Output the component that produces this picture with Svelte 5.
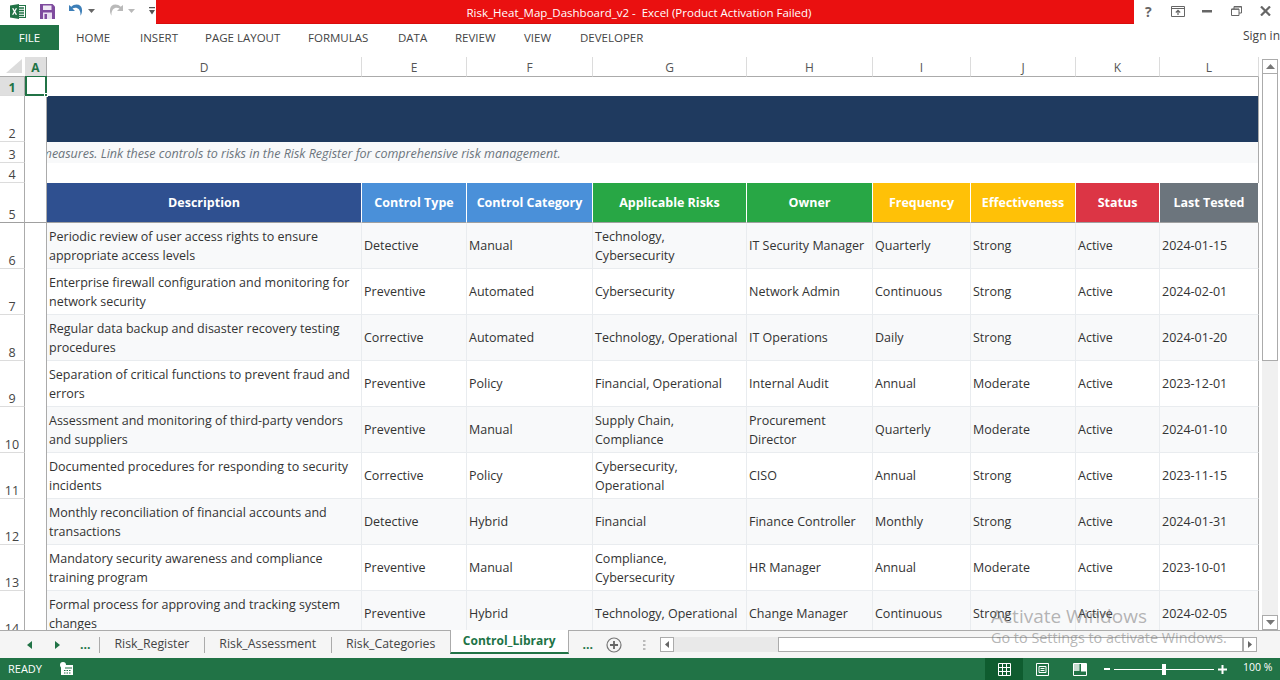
<script>
  const cols = ['D','E','F','G','H','I','J','K','L'];
  const heads = [
    ['Description','#2f5090'],['Control Type','#4a90d9'],['Control Category','#4a90d9'],
    ['Applicable Risks','#28a745'],['Owner','#28a745'],['Frequency','#ffc107'],
    ['Effectiveness','#ffc107'],['Status','#dc3545'],['Last Tested','#6c757d']
  ];
  const data = [
    [6,'Periodic review of user access rights to ensure appropriate access levels','Detective','Manual','Technology, Cybersecurity','IT Security Manager','Quarterly','Strong','Active','2024-01-15'],
    [7,'Enterprise firewall configuration and monitoring for network security','Preventive','Automated','Cybersecurity','Network Admin','Continuous','Strong','Active','2024-02-01'],
    [8,'Regular data backup and disaster recovery testing procedures','Corrective','Automated','Technology, Operational','IT Operations','Daily','Strong','Active','2024-01-20'],
    [9,'Separation of critical functions to prevent fraud and errors','Preventive','Policy','Financial, Operational','Internal Audit','Annual','Moderate','Active','2023-12-01'],
    [10,'Assessment and monitoring of third-party vendors and suppliers','Preventive','Manual','Supply Chain, Compliance','Procurement Director','Quarterly','Moderate','Active','2024-01-10'],
    [11,'Documented procedures for responding to security incidents','Corrective','Policy','Cybersecurity, Operational','CISO','Annual','Strong','Active','2023-11-15'],
    [12,'Monthly reconciliation of financial accounts and transactions','Detective','Hybrid','Financial','Finance Controller','Monthly','Strong','Active','2024-01-31'],
    [13,'Mandatory security awareness and compliance training program','Preventive','Manual','Compliance, Cybersecurity','HR Manager','Annual','Moderate','Active','2023-10-01'],
    [14,'Formal process for approving and tracking system changes','Preventive','Hybrid','Technology, Operational','Change Manager','Continuous','Strong','Active','2024-02-05']
  ];
  const menu = ['HOME','INSERT','PAGE LAYOUT','FORMULAS','DATA','REVIEW','VIEW','DEVELOPER'];
  const sheets = ['Risk_Register','Risk_Assessment','Risk_Categories'];
</script>

<div class="app">
  <header class="title">
    <div class="qat">
      <svg class="ico-xl" width="16" height="15" viewBox="0 0 16 15">
        <rect x="6.500" y="1.500" width="9" height="12" fill="#fff" stroke="#217346"/>
        <path d="M9 4h5M9 6.500h5M9 9h5M9 11.500h5" stroke="#217346" stroke-width="1.300"/>
        <path d="M0 1.500 9 0v15L0 13.500z" fill="#217346"/>
        <path d="M2 4.300h1.600l1 2 1-2h1.500L5.300 7.500l1.800 3.300H5.500l-1-2-1 2H2l1.800-3.300z" fill="#fff"/>
      </svg>
      <svg class="ico-save" width="15" height="15" viewBox="0 0 15 15">
        <path d="M0 0h12.500L15 2.500V15H0z" fill="#7e4a9e"/>
        <rect x="3" y="1.500" width="8.500" height="4.500" fill="#efe8f4"/>
        <rect x="3" y="8.500" width="9" height="6.500" fill="#e9dff0"/>
        <rect x="4.500" y="10" width="2.500" height="5" fill="#7e4a9e"/>
      </svg>
      <svg class="ico-undo" width="16" height="16" viewBox="0 0 16 16">
        <path d="M1 2v6h6L4.500 5.600C7.500 3.500 13 4.800 12.500 12.800 15 9 15 1.500 8.500 1.500 6.500 1.500 4.800 2.300 3.300 3.800z" fill="#3d7fb8"/>
      </svg>
      <svg class="caret c1" width="7" height="4" viewBox="0 0 7 4"><path d="M0 0h7L3.500 4z" fill="#666"/></svg>
      <svg class="ico-redo" width="16" height="16" viewBox="0 0 16 16">
        <path d="M15 2v6H9l2.500-2.400C8.500 3.500 3 4.800 3.500 12.800 1 9 1 1.500 7.500 1.500c2 0 3.700.8 5.200 2.300z" fill="#b9b9b9"/>
      </svg>
      <svg class="caret c2" width="7" height="4" viewBox="0 0 7 4"><path d="M0 0h7L3.500 4z" fill="#b9b9b9"/></svg>
      <svg class="custom" width="6" height="8" viewBox="0 0 6 8"><path d="M0 0h6v1.200H0zM0 3h6L3 7.500z" fill="#555"/></svg>
    </div>
    <div class="red"><span>Risk_Heat_Map_Dashboard_v2 -&nbsp; Excel (Product Activation Failed)</span></div>
    <div class="win">
      <span class="help">?</span>
      <svg class="w-full" width="14" height="11" viewBox="0 0 14 11"><path d="M.5.500h13v10H.5z M.5 2.500h13" fill="none" stroke="#666"/><path d="M7 9V4.500M4.800 6.500 7 4.300l2.200 2.200" fill="none" stroke="#666" stroke-width="1.200"/></svg>
      <svg class="w-min" width="10" height="3" viewBox="0 0 10 3"><rect width="10" height="2.500" fill="#666"/></svg>
      <svg class="w-max" width="11" height="10" viewBox="0 0 11 10"><path d="M.5 3h7.500v6.500H.5zM3 3V.5h7.500V7H8" fill="none" stroke="#666"/><path d="M.5 3.300h7.500M3 1h7.500" stroke="#666"/></svg>
      <svg class="w-x" width="11" height="10" viewBox="0 0 11 10"><path d="M1 .5 10 9.500M10 .5 1 9.500" stroke="#666" stroke-width="2.200"/></svg>
    </div>
  </header>

  <nav class="ribbon">
    <span class="file">FILE</span>
    <div class="menu">
      {#each menu as m}<span>{m}</span>{/each}
    </div>
    <span class="signin">Sign in</span>
  </nav>

  <main class="work">
    <div class="sheet">
      <div class="corner"><svg width="16" height="14" viewBox="0 0 16 14"><path d="M16 0v14H0z" fill="#dcdcdc"/></svg></div>
      <div class="ch sel">A</div>
      {#each cols as c}<div class="ch">{c}</div>{/each}

      <div class="rh rsel">1</div>
      <div class="acell"><i></i><b></b></div>
      <div class="blank span9"></div>

      <div class="rh">2</div><div class="a"></div>
      <div class="navy span9"></div>

      <div class="rh">3</div><div class="a"></div>
      <div class="note span9"><span>measures. Link these controls to risks in the Risk Register for comprehensive risk management.</span></div>

      <div class="rh">4</div><div class="a"></div>
      <div class="blank span9"></div>

      <div class="rh hline">5</div><div class="a hline"></div>
      {#each heads as h}<div class="th" style="background:{h[1]}">{h[0]}</div>{/each}

      {#each data as r, i}
        <div class="rh">{r[0]}</div><div class="a"></div>
        {#each r.slice(1) as v, j}<div class="td" class:alt={i % 2 === 0} class:last={j === 8}>{v}</div>{/each}
      {/each}
    </div>

    <aside class="vscroll">
      <div class="btn"><svg width="9" height="5" viewBox="0 0 9 5"><path d="M4.500 0 9 5H0z" fill="#777"/></svg></div>
      <div class="thumb"></div>
      <div class="track"></div>
      <div class="btn"><svg width="9" height="5" viewBox="0 0 9 5"><path d="M0 0h9L4.500 5z" fill="#777"/></svg></div>
    </aside>
  </main>

  <footer class="tabs">
    <div class="tnav">
      <svg width="5" height="8" viewBox="0 0 5 8"><path d="M5 0v8L0 4z" fill="#217346"/></svg>
      <svg width="5" height="8" viewBox="0 0 5 8"><path d="M0 0v8l5-4z" fill="#217346"/></svg>
      <b>...</b>
    </div>
    {#each sheets as s}<div class="tab">{s}</div>{/each}
    <div class="tab active">Control_Library</div>
    <b class="more">...</b>
    <svg class="plus" width="16" height="16" viewBox="0 0 16 16"><circle cx="8" cy="8" r="7" fill="none" stroke="#777" stroke-width="1.200"/><path d="M8 4v8M4 8h8" stroke="#666" stroke-width="1.800"/></svg>
    <svg class="dots" width="3" height="10" viewBox="0 0 3 10"><path d="M0 0h2.500v2H0zM0 4h2.500v2H0zM0 8h2.500v2H0z" fill="#bbb"/></svg>
    <div class="hscroll">
      <div class="hbtn"><svg width="4" height="7" viewBox="0 0 4 7"><path d="M4 0v7L0 3.500z" fill="#666"/></svg></div>
      <div class="htrack"></div>
      <div class="hthumb"></div>
      <div class="hbtn"><svg width="4" height="7" viewBox="0 0 4 7"><path d="M0 0v7l4-3.500z" fill="#666"/></svg></div>
    </div>
  </footer>

  <footer class="status">
    <span class="ready">READY</span>
    <svg class="macro" width="13" height="13" viewBox="0 0 13 13">
      <path d="M1 3h12v10H1z" fill="#fff"/><circle cx="3" cy="3" r="3" fill="#fff"/>
      <path d="M5 5.500h7v1H5zM4 8h1.500v1H4zM6.500 8H8v1H6.500zM9 8h1.500v1H9zM4 10.500h1.500v1H4zM6.500 10.500H8v1H6.500zM9 10.500h1.500v1H9z" fill="#217346"/>
    </svg>
    <div class="views">
      <div class="view on"><svg width="13" height="13" viewBox="0 0 13 13"><path d="M.5.500h12v12H.5zM.5 4.500h12M.5 8.500h12M4.500.500v12M8.500.500v12" fill="none" stroke="#fff"/></svg></div>
      <div class="view"><svg width="13" height="13" viewBox="0 0 13 13"><path d="M.5.500h12v12H.5z" fill="none" stroke="#fff"/><path d="M3 3.500h7v6H3z" fill="none" stroke="#fff"/><path d="M4.500 5.500h4M4.500 7.500h4" stroke="#fff"/></svg></div>
      <div class="view"><svg width="14" height="13" viewBox="0 0 14 13"><path d="M.5.500h13v12H.5z" fill="none" stroke="#fff"/><path d="M1 1h5.500v7H1z" fill="#fff" opacity=".75"/><path d="M8 1h5v7.500H8z" fill="#fff"/></svg></div>
    </div>
    <div class="zoomctl">
      <span class="minus"></span>
      <div class="slider"><i></i></div>
      <svg class="zplus" width="9" height="9" viewBox="0 0 9 9"><path d="M4.500 0v9M0 4.500h9" stroke="#fff" stroke-width="2"/></svg>
    </div>
    <span class="pct">100 %</span>
  </footer>

  <div class="activate">
    <div class="a1">Activate Windows</div>
    <div class="a2">Go to Settings to activate Windows.</div>
  </div>
</div>

<style>
  :global(body) { margin: 0; background: #fff; }
  .app {
    position: relative;
    width: 1280px;
    height: 680px;
    overflow: hidden;
    display: flex;
    flex-direction: column;
    font-family: "Open Sans", "Noto Sans", sans-serif;
    font-size: 12px;
    color: #444;
  }
  .title { height: 25px; display: flex; flex: none; }
  .qat { width: 156px; height: 22px; flex: none; display: flex; align-items: center; padding-left: 10px; box-sizing: border-box; }
  .ico-xl { margin-right: 14px; }
  .ico-save { margin-right: 13px; }
  .ico-undo { margin-right: 4px; }
  .c1 { margin-right: 13px; }
  .ico-redo { margin-right: 4px; }
  .c2 { margin-right: 14px; }
  .red {
    flex: 1; height: 24px; background: #ea1010; border-bottom: 1px solid #d80c0c;
    color: #fff; display: flex; align-items: center; justify-content: center; padding: 2px 12px 0 0; box-sizing: border-box;
    font-size: 11.500px;
  }
  .win { width: 146px; height: 22px; flex: none; display: flex; align-items: center; padding-left: 11px; box-sizing: border-box; }
  .help { font-weight: 700; font-size: 14px; color: #666; width: 7px; margin-right: 19px; }
  .w-full { margin-right: 17px; }
  .w-min { margin-right: 19px; }
  .w-max { margin-right: 18px; }

  .ribbon { height: 25px; flex: none; display: flex; align-items: center; position: relative; }
  .file { width: 59px; height: 25px; background: #217346; color: #fff; display: flex; align-items: center; justify-content: center; font-size: 11.500px; }
  .menu { display: flex; margin-left: 17px; font-size: 11.500px; margin-top: -1px; }
  .menu span:nth-child(1) { width: 64px; }
  .menu span:nth-child(2) { width: 65px; }
  .menu span:nth-child(3) { width: 103px; }
  .menu span:nth-child(4) { width: 90px; }
  .menu span:nth-child(5) { width: 57px; }
  .menu span:nth-child(6) { width: 69px; }
  .menu span:nth-child(7) { width: 56px; }
  .signin { position: absolute; right: 0; top: 2px; font-size: 12px; }

  .work { flex: 1; min-height: 0; display: flex; overflow: hidden; padding-top: 7px; background: #fff; }
  .sheet {
    width: 1259px; flex: none; height: 573px; overflow: hidden; display: grid;
    grid-template-columns: 25px 22px 315px 105px 126px 154px 126px 98px 105px 84px 99px;
    grid-template-rows: 20px 19px 46px 21px 20px 40px repeat(9, 46px);
  }
  .corner { border-bottom: 1px solid #ababab; display: flex; align-items: flex-end; justify-content: flex-end; padding: 0 3px 3px 0; box-sizing: border-box; }
  .ch { border-bottom: 1px solid #ababab; border-right: 1px solid #dcdcdc; display: flex; align-items: center; justify-content: center; padding-top: 1px; font-size: 12px; color: #555; box-sizing: border-box; }
  .ch.sel { background: #dfdfdf; color: #217346; font-weight: 700; border-right-color: #ababab; }
  .rh { border-bottom: 1px solid #dcdcdc; border-right: 1px solid #ababab; display: flex; align-items: flex-end; justify-content: center; line-height: 15px; color: #444; box-sizing: border-box; overflow: hidden; font-size: 12.500px; }
  .rh.rsel { background: #dfdfdf; color: #217346; font-weight: 700; }
  .a { border-right: 1px solid #ababab; box-sizing: border-box; }
  .hline { border-bottom: 1px solid #a0a0a0; }
  .acell { position: relative; border-right: 1px solid #ababab; box-sizing: border-box; }
  .acell i { position: absolute; inset: -1px -1px 0 0; border: 2px solid #217346; border-top-width: 1px; }
  .acell b { position: absolute; right: -2px; bottom: -1px; width: 4px; height: 4px; background: #217346; border: 1px solid #fff; box-sizing: border-box; }
  .span9 { grid-column: span 9; border-right: 1px solid #ababab; box-sizing: border-box; }
  .navy { background: #1f3a5f; }
  .note { background: #f8f9fa; display: flex; align-items: center; overflow: hidden; font-style: italic; color: #6c757d; white-space: nowrap; font-size: 12.500px; padding-top: 2px; }
  .note span { margin-left: -6px; }
  .th { color: #fff; font-weight: 700; display: flex; align-items: center; justify-content: center; border-right: 1px solid #fff; border-bottom: 1px solid #a0a0a0; box-sizing: border-box; font-size: 12.500px; white-space: nowrap; }
  .td { display: flex; align-items: center; padding: 0 4px 0 2px; line-height: 19px; background: #fff; border-right: 1px solid #e9ecef; border-bottom: 1px solid #e9ecef; box-sizing: border-box; color: #333; overflow: hidden; font-size: 12.500px; }
  .td.alt { background: #f8f9fa; }
  .td.last { border-right: 1px solid #ababab; }

  .vscroll { width: 21px; flex: none; display: flex; flex-direction: column; align-items: flex-start; padding: 2px 0 0 3px; box-sizing: border-box; height: 573px; }
  .btn { width: 16px; height: 15px; border: 1px solid #ababab; box-sizing: border-box; display: flex; align-items: center; justify-content: center; background: #fff; flex: none; }
  .thumb { width: 16px; height: 288px; border: 1px solid #ababab; box-sizing: border-box; margin-top: -1px; background: #fff; flex: none; }
  .track { width: 16px; flex: 1; background: #f0f0f0; }

  .tabs { height: 28px; flex: none; border-top: 1px solid #ababab; box-sizing: border-box; background: #f5f5f5; display: flex; align-items: center; position: relative; font-size: 12.300px; }
  .tnav { width: 100px; flex: none; display: flex; align-items: center; padding-left: 27px; box-sizing: border-box; height: 16px; border-right: 1px solid #ababab; }
  .tnav svg:nth-child(2) { margin-left: 23px; }
  .tnav b { margin-left: 20px; color: #217346; }
  .tab { flex: none; height: 16px; line-height: 14px; padding: 0 14.500px; border-right: 1px solid #ababab; color: #444; box-sizing: content-box; }
  .tab.active { height: 24px; line-height: 21px; box-sizing: border-box; margin: -1px 0 0 -1px; background: #fff; border: 1px solid #ababab; border-top: 0; border-bottom: 2px solid #217346; color: #217346; font-weight: 700; padding: 0 12px; align-self: flex-start; font-size: 12px; }
  .more { margin-left: 14px; color: #217346; }
  .plus { margin-left: 13px; }
  .dots { margin-left: 21px; }
  .hscroll { position: absolute; left: 660px; top: 6px; width: 597px; height: 15px; display: flex; }
  .hbtn { width: 14px; height: 15px; border: 1px solid #ababab; background: #fff; box-sizing: border-box; display: flex; align-items: center; justify-content: center; flex: none; }
  .htrack { width: 104px; background: #e9e9e9; flex: none; }
  .hthumb { flex: 1; border: 1px solid #ababab; background: #fff; box-sizing: border-box; }

  .status { height: 22px; flex: none; background: #217346; color: #fff; display: flex; align-items: center; position: relative; font-size: 11px; padding-bottom: 2px; box-sizing: border-box; }
  .ready { margin-left: 8px; width: 52px; }
  .macro { margin-top: 1px; }
  .views { position: absolute; left: 985px; top: 0; display: flex; height: 22px; }
  .view { width: 38px; height: 22px; display: flex; align-items: center; justify-content: center; }
  .view.on { background: #0f5c2f; }
  .zoomctl { position: absolute; left: 1104px; top: 0; height: 22px; display: flex; align-items: center; }
  .minus { width: 6px; height: 2px; background: #fff; margin-right: 4px; }
  .slider { width: 100px; height: 1px; background: #fff; position: relative; margin-right: 4px; }
  .slider i { position: absolute; left: 48px; top: -5px; width: 4px; height: 11px; background: #fff; }
  .pct { position: absolute; left: 1243px; top: 2px; font-size: 10.500px; }

  .activate { position: absolute; left: 991px; top: 603px; color: rgba(120,120,120,.55); pointer-events: none; white-space: nowrap; }
  .a1 { font-size: 19px; line-height: 26px; }
  .a2 { font-size: 14.400px; line-height: 20px; margin-top: -1px; }
</style>
